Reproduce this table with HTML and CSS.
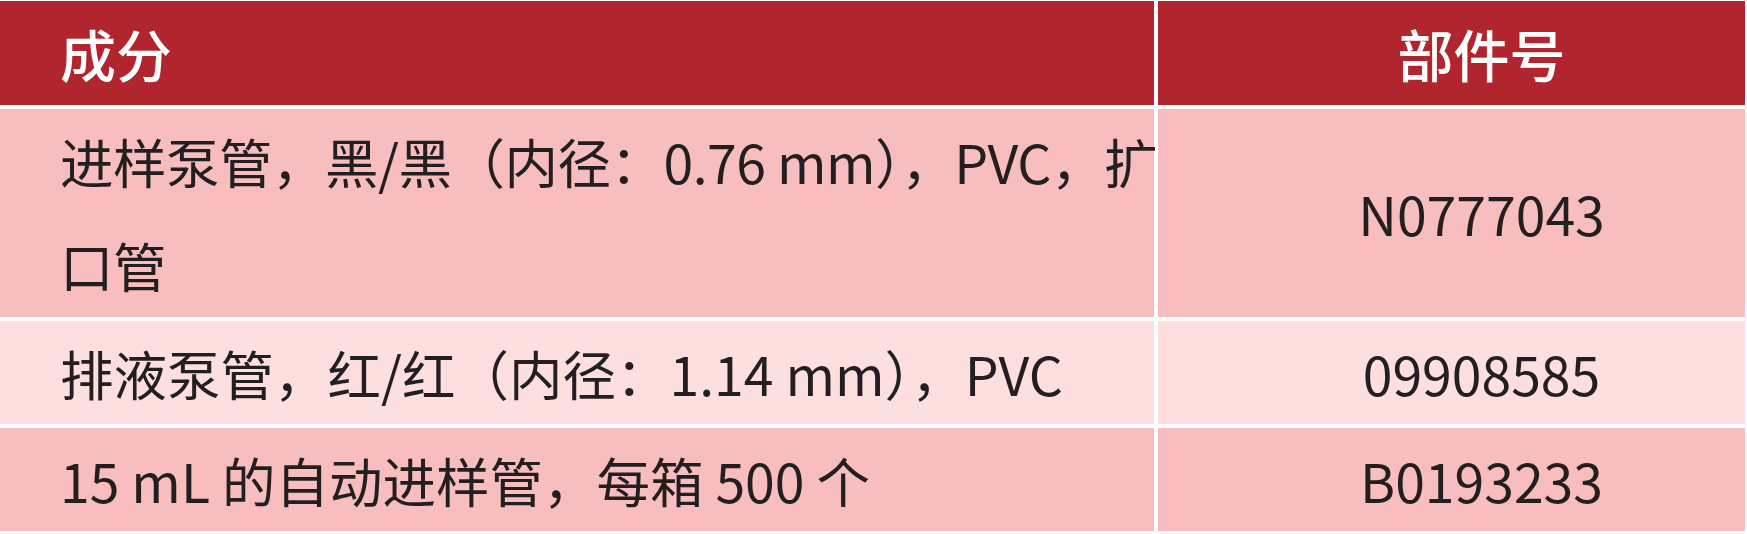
FILE: index.html
```html
<!DOCTYPE html>
<html lang="zh">
<head>
<meta charset="utf-8">
<title>部件号</title>
<link rel="stylesheet" href="styles.css">
</head>
<body>
<div class="table">
  <div class="cell head name">成分</div>
  <div class="cell head part">部件号</div>

  <div class="cell row-a name"><span class="lines tight">进样泵管，黑/黑（内径：0.76 mm），PVC，扩<br>口管</span></div>
  <div class="cell row-a part">N0777043</div>

  <div class="cell row-b name">排液泵管，红/红（内径：1.14 mm），PVC</div>
  <div class="cell row-b part">09908585</div>

  <div class="cell row-a name">15 mL 的自动进样管，每箱 500 个</div>
  <div class="cell row-a part">B0193233</div>
</div>
</body>
</html>
```

FILE: styles.css
```css
html, body {
  margin: 0;
  padding: 0;
  background: #ffffff;
}

body {
  font-family: "Noto Sans CJK SC", "Noto Sans", sans-serif;
  color: #231f20;
}

.table {
  display: grid;
  grid-template-columns: 1154px 587px;
  grid-template-rows: 104px 208px 103px 103px;
  column-gap: 4px;
  row-gap: 4px;
  padding-top: 1px;
  width: 1745px;
}

.cell {
  display: flex;
  align-items: center;
  font-size: 53.5px;
  line-height: 104px;
  white-space: nowrap;
}

.name {
  padding-left: 60px;
}

.part {
  padding-left: 60px;
  justify-content: center;
}

.head {
  background: #b1262e;
  color: #ffffff;
  font-weight: 500;
  font-size: 56px;
}

.row-a {
  background: #f8bdbe;
}

.row-b {
  background: #fddfe0;
}

.tight {
  letter-spacing: -0.5px;
}
```
